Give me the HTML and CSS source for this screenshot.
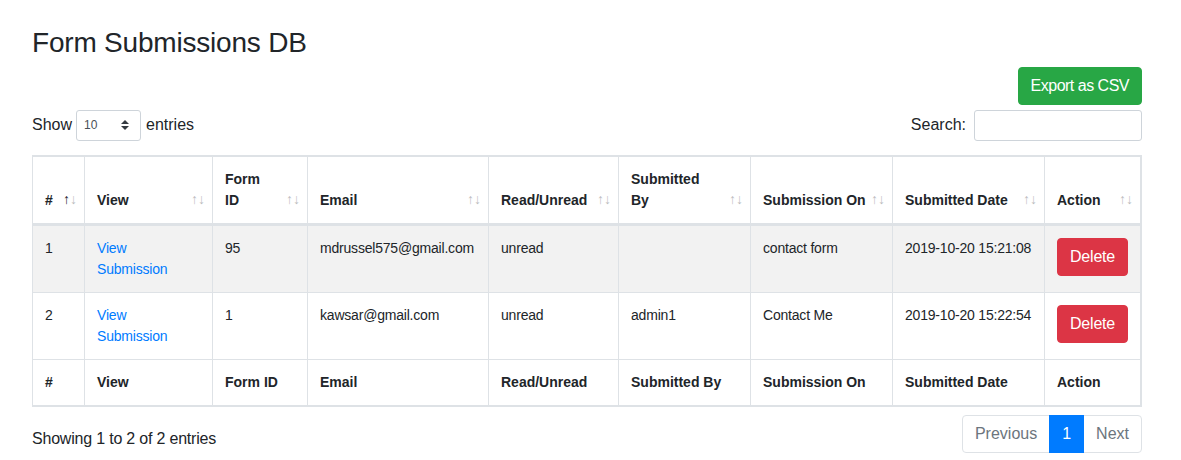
FILE: index.html
```html
<!DOCTYPE html>
<html lang="en">
<head>
<meta charset="utf-8">
<title>Form Submissions DB</title>
<link rel="stylesheet" href="styles.css">
</head>
<body>
<div class="page">
  <h3 class="title">Form Submissions DB</h3>
  <div class="top-actions">
    <button class="btn btn-success btn-export" type="button">Export as CSV</button>
  </div>
  <div class="dt-controls">
    <label class="dt-length">Show
      <span class="select-wrap">
        <select class="select-sm">
          <option>10</option><option>25</option><option>50</option><option>100</option>
        </select>
        <svg class="select-arrow" viewBox="0 0 4 5" width="8" height="10" aria-hidden="true"><path d="M2 0L0 2h4zm0 5L0 3h4z" fill="#343a40"/></svg>
      </span>
      entries</label>
    <label class="dt-filter">Search:<input class="input-sm" type="search"></label>
  </div>
  <table class="dt">
    <colgroup>
      <col class="c1"><col class="c2"><col class="c3"><col class="c4"><col class="c5"><col class="c6"><col class="c7"><col class="c8"><col class="c9">
    </colgroup>
    <thead>
      <tr>
        <th class="sorting sorting-asc">#</th>
        <th class="sorting">View</th>
        <th class="sorting">Form ID</th>
        <th class="sorting">Email</th>
        <th class="sorting">Read/Unread</th>
        <th class="sorting">Submitted By</th>
        <th class="sorting nowrap">Submission On</th>
        <th class="sorting nowrap">Submitted Date</th>
        <th class="sorting">Action</th>
      </tr>
    </thead>
    <tbody>
      <tr class="odd">
        <td>1</td>
        <td><a href="#" class="link">View Submission</a></td>
        <td>95</td>
        <td>mdrussel575@gmail.com</td>
        <td>unread</td>
        <td></td>
        <td>contact form</td>
        <td class="nowrap">2019-10-20 15:21:08</td>
        <td><button class="btn btn-danger" type="button">Delete</button></td>
      </tr>
      <tr>
        <td>2</td>
        <td><a href="#" class="link">View Submission</a></td>
        <td>1</td>
        <td>kawsar@gmail.com</td>
        <td>unread</td>
        <td>admin1</td>
        <td>Contact Me</td>
        <td class="nowrap">2019-10-20 15:22:54</td>
        <td><button class="btn btn-danger" type="button">Delete</button></td>
      </tr>
    </tbody>
    <tfoot>
      <tr>
        <th>#</th>
        <th>View</th>
        <th class="nowrap">Form ID</th>
        <th>Email</th>
        <th>Read/Unread</th>
        <th class="nowrap">Submitted By</th>
        <th class="nowrap">Submission On</th>
        <th class="nowrap">Submitted Date</th>
        <th>Action</th>
      </tr>
    </tfoot>
  </table>
  <div class="dt-bottom">
    <div class="dt-info">Showing 1 to 2 of 2 entries</div>
    <ul class="pagination">
      <li class="page-item disabled"><span class="page-link first">Previous</span></li>
      <li class="page-item active"><span class="page-link">1</span></li>
      <li class="page-item disabled"><span class="page-link last">Next</span></li>
    </ul>
  </div>
</div>
</body>
</html>
```
FILE: styles.css
```css
* { box-sizing: border-box; }

body {
  margin: 0;
  font-family: "Liberation Sans", Arial, sans-serif;
  font-size: 16px;
  line-height: 1.5;
  color: #212529;
  background: #fff;
}

.page {
  width: 1110px;
  margin-left: 32px;
  padding-top: 26px;
}

.title {
  margin: 0 0 7px;
  font-size: 28px;
  font-weight: 400;
  line-height: 1.2;
  letter-spacing: -0.2px;
  color: #212529;
}

.top-actions {
  display: flex;
  justify-content: flex-end;
}

.btn {
  display: inline-block;
  font-family: inherit;
  font-size: 16px;
  line-height: 24px;
  padding: 6px 12px;
  border: 1px solid transparent;
  border-radius: 4px;
  color: #fff;
  cursor: pointer;
}

.btn-export {
  letter-spacing: -0.5px;
}

.btn-success {
  background: #28a745;
  border-color: #28a745;
}

.btn-danger {
  background: #dc3545;
  border-color: #dc3545;
  letter-spacing: -0.2px;
}

.dt-controls {
  display: flex;
  justify-content: space-between;
  align-items: center;
  margin-top: 5px;
}

.dt-length,
.dt-filter {
  display: flex;
  align-items: center;
  font-size: 16px;
  font-weight: 400;
}

.select-wrap {
  position: relative;
  display: inline-block;
  margin: 0 5px 0 4px;
}

.select-sm {
  appearance: none;
  -webkit-appearance: none;
  display: block;
  width: 65px;
  height: 31px;
  padding: 4px 24px 4px 7px;
  font-family: inherit;
  font-size: 12px;
  color: #495057;
  background: #fff;
  border: 1px solid #ced4da;
  border-radius: 3px;
}

.select-arrow {
  position: absolute;
  right: 12px;
  top: 10px;
  pointer-events: none;
}

.input-sm {
  width: 168px;
  height: 31px;
  margin-left: 8px;
  padding: 4px 8px;
  font-family: inherit;
  font-size: 14px;
  border: 1px solid #ced4da;
  border-radius: 3px;
}

.dt {
  width: 1110px;
  margin-top: 14px;
  table-layout: fixed;
  border-collapse: separate;
  border-spacing: 0;
  border: 1px solid #dee2e6;
  font-size: 14px;
  line-height: 21px;
}

.c1 { width: 52px; }
.c2 { width: 128px; }
.c3 { width: 95px; }
.c4 { width: 181px; }
.c5 { width: 130px; }
.c6 { width: 132px; }
.c7 { width: 142px; }
.c8 { width: 152px; }

.dt th,
.dt td {
  padding: 12px;
  text-align: left;
  vertical-align: top;
  border: 1px solid #dee2e6;
  border-left-width: 0;
}

.dt td {
  letter-spacing: -0.2px;
}

.dt th {
  font-weight: 700;
}

.dt .nowrap {
  white-space: nowrap;
}

.dt thead th {
  vertical-align: bottom;
  border-bottom-width: 2px;
}

.dt tbody td {
  border-bottom-width: 0;
}

.dt tbody tr.odd {
  background: #f2f2f2;
}

.dt th.sorting {
  position: relative;
  padding-right: 30px;
}

.dt th.sorting::before,
.dt th.sorting::after {
  position: absolute;
  bottom: 0.9em;
  display: block;
  opacity: 0.3;
  font-weight: 400;
}

.dt th.sorting::before {
  right: 1em;
  content: "\2191";
}

.dt th.sorting::after {
  right: 0.5em;
  content: "\2193";
}

.dt th.sorting-asc::before {
  opacity: 1;
}

.link {
  color: #007bff;
  text-decoration: none;
}

.dt-bottom {
  display: flex;
  justify-content: space-between;
  align-items: flex-start;
  margin-top: 8px;
}

.dt-info {
  padding-top: 12px;
  letter-spacing: -0.2px;
}

.pagination {
  display: flex;
  list-style: none;
  margin: 0;
  padding: 0;
}

.page-link {
  display: block;
  padding: 8px 12px;
  margin-left: -1px;
  line-height: 20px;
  font-size: 16px;
  color: #6c757d;
  background: #fff;
  border: 1px solid #dee2e6;
}

.page-link.first {
  margin-left: 0;
  border-radius: 4px 0 0 4px;
}

.page-link.last {
  border-radius: 0 4px 4px 0;
}

.page-item.active .page-link {
  color: #fff;
  background: #007bff;
  border-color: #007bff;
  position: relative;
  z-index: 1;
}
```
